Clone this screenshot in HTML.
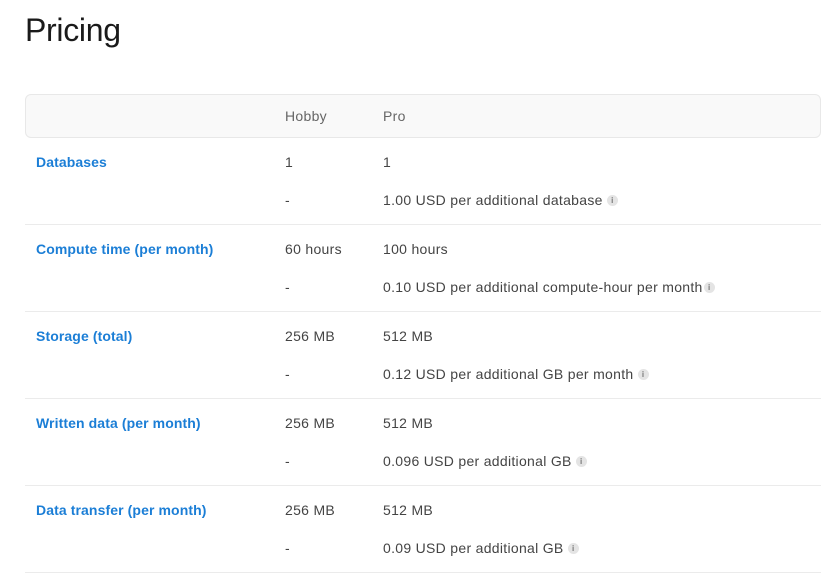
<!DOCTYPE html>
<html><head><style>
body{margin:0;background:#fff;font-family:"Liberation Sans",sans-serif;color:#444;font-size:14px;}
h1{position:absolute;left:25px;top:12px;margin:0;font-size:32px;font-weight:500;color:#1a1a1a;letter-spacing:-0.3px}
.hdr{position:absolute;left:25px;top:94px;width:794px;height:42px;background:#f9f9f9;border:1px solid #e8e8e8;border-radius:6px}
.t{position:absolute;white-space:nowrap;line-height:16px;letter-spacing:0.3px}
.lbl{color:#1b7ed6;font-weight:bold;letter-spacing:0.1px}
.line{position:absolute;left:25px;width:796px;height:1px;background:#ebebeb}
.i{display:inline-block;width:11px;height:11px;border-radius:50%;background:#e4e4e4;color:#777;font-size:8px;line-height:11px;text-align:center;font-weight:bold;vertical-align:2px;margin-left:4px;letter-spacing:0}
</style></head><body>
<h1>Pricing</h1>
<div class="hdr"></div>
<div class="t" style="left:285px;top:108px;color:#666">Hobby</div>
<div class="t" style="left:383px;top:108px;color:#666">Pro</div>

<div class="t lbl" style="left:36px;top:154px">Databases</div>
<div class="t" style="left:285px;top:154px">1</div>
<div class="t" style="left:383px;top:154px">1</div>
<div class="t" style="left:285px;top:192px">-</div>
<div class="t" style="left:383px;top:192px">1.00 USD per additional database<span class="i">i</span></div>
<div class="line" style="top:224px"></div>

<div class="t lbl" style="left:36px;top:241px">Compute time (per month)</div>
<div class="t" style="left:285px;top:241px">60 hours</div>
<div class="t" style="left:383px;top:241px">100 hours</div>
<div class="t" style="left:285px;top:279px">-</div>
<div class="t" style="left:383px;top:279px">0.10 USD per additional compute-hour per month<span class="i" style="margin-left:1px">i</span></div>
<div class="line" style="top:311px"></div>

<div class="t lbl" style="left:36px;top:328px">Storage (total)</div>
<div class="t" style="left:285px;top:328px">256 MB</div>
<div class="t" style="left:383px;top:328px">512 MB</div>
<div class="t" style="left:285px;top:366px">-</div>
<div class="t" style="left:383px;top:366px">0.12 USD per additional GB per month<span class="i">i</span></div>
<div class="line" style="top:398px"></div>

<div class="t lbl" style="left:36px;top:415px">Written data (per month)</div>
<div class="t" style="left:285px;top:415px">256 MB</div>
<div class="t" style="left:383px;top:415px">512 MB</div>
<div class="t" style="left:285px;top:453px">-</div>
<div class="t" style="left:383px;top:453px">0.096 USD per additional GB<span class="i">i</span></div>
<div class="line" style="top:485px"></div>

<div class="t lbl" style="left:36px;top:502px">Data transfer (per month)</div>
<div class="t" style="left:285px;top:502px">256 MB</div>
<div class="t" style="left:383px;top:502px">512 MB</div>
<div class="t" style="left:285px;top:540px">-</div>
<div class="t" style="left:383px;top:540px">0.09 USD per additional GB<span class="i">i</span></div>
<div class="line" style="top:572px"></div>
</body></html>
